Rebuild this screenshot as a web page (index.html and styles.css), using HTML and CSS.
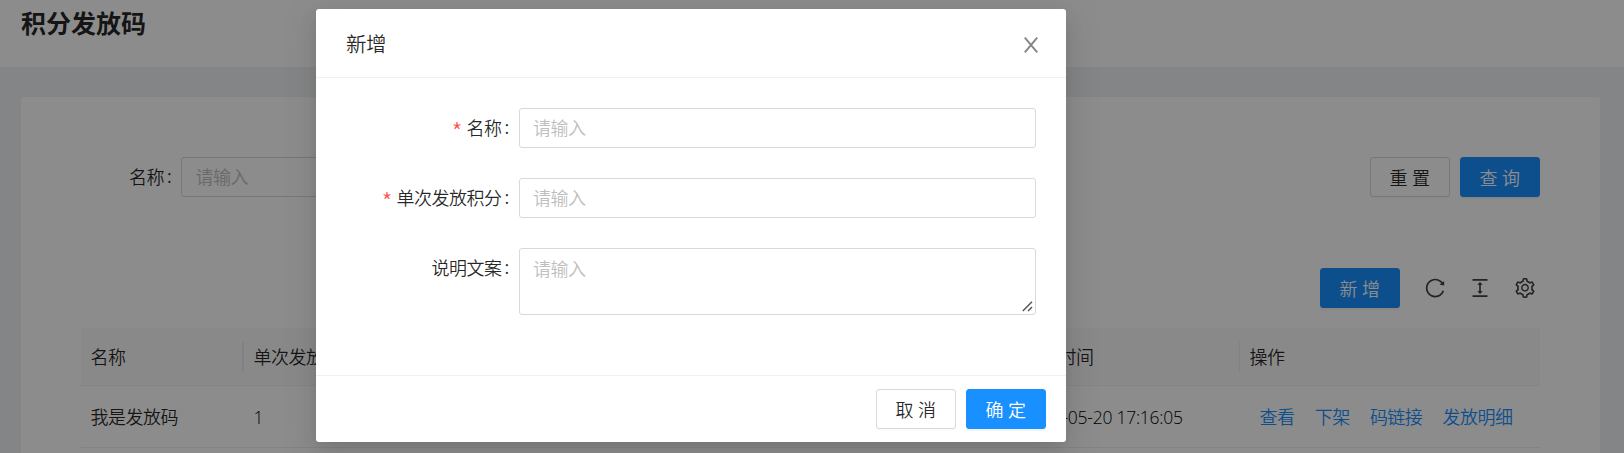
FILE: index.html
```html
<!DOCTYPE html>
<html lang="zh-CN">
<head>
<meta charset="utf-8">
<title>积分发放码</title>
<link rel="stylesheet" href="styles.css">
</head>
<body>
<div class="page">
  <header class="page-header"><h1 class="page-title">积分发放码</h1></header>
  <main class="card">
    <form class="search">
      <label class="label">名称<span class="colon">:</span></label>
      <input class="input search-input" placeholder="请输入">
      <div class="search-actions">
        <button type="button" class="btn">重置</button>
        <button type="button" class="btn primary">查询</button>
      </div>
    </form>
    <div class="toolbar">
      <button type="button" class="btn primary">新增</button>
      <div class="tools">
        <svg class="icon" viewBox="64 64 896 896"><path d="M909.1 209.3l-56.4 44.1C775.8 155.1 656.2 92 521.9 92 290 92 102.3 279.5 102 511.5 101.7 743.7 289.8 932 521.9 932c181.3 0 335.8-115 394.6-276.1 1.5-4.2-.7-8.9-4.9-10.3l-56.7-19.5a8 8 0 0 0-10.1 4.8c-1.8 5-3.8 10-5.9 14.9-17.3 41-42.1 77.8-73.7 109.4A344.77 344.77 0 0 1 655.9 829c-42.3 17.9-87.4 27-133.8 27-46.5 0-91.5-9.1-133.8-27A341.5 341.5 0 0 1 279 755.2a342.16 342.16 0 0 1-73.7-109.4c-17.9-42.4-27-87.4-27-133.9s9.1-91.5 27-133.9c17.3-41 42.1-77.8 73.7-109.4 31.6-31.6 68.4-56.4 109.3-73.8 42.3-17.9 87.4-27 133.8-27 46.5 0 91.5 9.1 133.8 27a341.5 341.5 0 0 1 109.3 73.8c9.9 9.9 19.2 20.4 27.8 31.4l-60.2 47a8 8 0 0 0 3 14.1l175.6 43c5 1.2 9.9-2.6 9.9-7.7l.8-180.9c-.1-6.6-7.8-10.3-13-6.2z"/></svg>
        <svg class="icon" viewBox="64 64 896 896"><path d="M840 836H184c-4.4 0-8 3.600-8 8v60c0 4.400 3.600 8 8 8h656c4.400 0 8-3.600 8-8v-60c0-4.400-3.600-8-8-8zm0-724H184c-4.400 0-8 3.600-8 8v60c0 4.400 3.600 8 8 8h656c4.400 0 8-3.600 8-8v-60c0-4.400-3.600-8-8-8zM610.800 378c6 0 9.400-7 5.700-11.700L515.700 238.700a7.140 7.140 0 0 0-11.300 0L403.600 366.300a7.230 7.230 0 0 0 5.700 11.700H476v268h-62.800c-6 0-9.400 7-5.700 11.700l100.800 127.500c2.900 3.700 8.500 3.700 11.300 0l100.800-127.500c3.700-4.700.4-11.700-5.700-11.700H548V378h62.800z"/></svg>
        <svg class="icon" viewBox="64 64 896 896"><path d="M924.8 625.7l-65.500-56c3.100-19 4.700-38.400 4.700-57.800s-1.600-38.800-4.700-57.800l65.500-56a32.030 32.030 0 0 0 9.300-35.200l-.9-2.600a443.740 443.740 0 0 0-79.700-137.900l-1.800-2.100a32.120 32.120 0 0 0-35.100-9.500l-81.300 28.900c-30-24.600-63.500-44-99.700-57.600l-15.700-85a32.050 32.050 0 0 0-25.800-25.700l-2.700-.5c-52.100-9.400-106.900-9.400-159 0l-2.700.5a32.050 32.050 0 0 0-25.800 25.700l-15.800 85.400a351.860 351.860 0 0 0-99 57.400l-81.900-29.100a32 32 0 0 0-35.100 9.500l-1.800 2.100a446.020 446.020 0 0 0-79.700 137.900l-.9 2.600c-4.500 12.500-.8 26.500 9.300 35.200l66.300 56.600c-3.100 18.800-4.600 38-4.600 57.100 0 19.200 1.500 38.400 4.600 57.100L99 625.500a32.030 32.030 0 0 0-9.300 35.200l.9 2.600c18.100 50.400 44.900 96.900 79.700 137.900l1.800 2.100a32.120 32.120 0 0 0 35.100 9.500l81.900-29.100c29.800 24.500 63.100 43.900 99 57.400l15.800 85.400a32.050 32.050 0 0 0 25.800 25.700l2.700.5a449.400 449.400 0 0 0 159 0l2.700-.5a32.050 32.050 0 0 0 25.800-25.700l15.700-85a350 350 0 0 0 99.700-57.600l81.300 28.900a32 32 0 0 0 35.100-9.500l1.800-2.100c34.800-41.100 61.600-87.500 79.700-137.900l.9-2.600c4.500-12.300.8-26.300-9.300-35zM788.300 465.900c2.500 15.100 3.800 30.600 3.800 46.100s-1.300 31-3.800 46.100l-6.600 40.100 74.700 63.900a370.030 370.030 0 0 1-42.600 73.600L721 702.800l-31.400 25.800c-23.900 19.600-50.500 35-79.300 45.800l-38.100 14.300-17.900 97a377.500 377.500 0 0 1-85 0l-17.900-97.200-37.800-14.500c-28.500-10.800-55-26.200-78.700-45.700l-31.400-25.900-93.400 33.200c-17-22.900-31.200-47.600-42.600-73.600l75.500-64.500-6.500-40c-2.400-14.900-3.700-30.300-3.700-45.500 0-15.300 1.200-30.600 3.700-45.500l6.500-40-75.500-64.500c11.300-26.100 25.600-50.700 42.600-73.600l93.400 33.200 31.400-25.900c23.700-19.500 50.200-34.900 78.700-45.700l37.900-14.300 17.900-97.200c28.100-3.200 56.800-3.200 85 0l17.900 97 38.100 14.300c28.700 10.800 55.400 26.200 79.300 45.800l31.400 25.800 92.800-32.900c17 22.900 31.200 47.600 42.600 73.600L781.800 426l6.500 39.900zM512 326c-97.200 0-176 78.800-176 176s78.800 176 176 176 176-78.800 176-176-78.800-176-176-176zm79.200 255.200A111.600 111.600 0 0 1 512 614c-29.900 0-58-11.700-79.200-32.800A111.600 111.600 0 0 1 400 502c0-29.900 11.700-58 32.800-79.200C454 401.600 482.100 390 512 390c29.900 0 58 11.600 79.200 32.800A111.600 111.600 0 0 1 624 502c0 29.900-11.700 58-32.800 79.200z"/></svg>
      </div>
    </div>
    <div class="table">
      <div class="row head">
        <div class="cell split">名称</div>
        <div class="cell">单次发放积分</div>
        <div class="cell split thin">创建时间</div>
        <div class="cell">操作</div>
      </div>
      <div class="row">
        <div class="cell">我是发放码</div>
        <div class="cell latin">1</div>
        <div class="cell latin">2022-05-20 17:16:05</div>
        <div class="cell links"><a>查看</a><a>下架</a><a>码链接</a><a>发放明细</a></div>
      </div>
    </div>
  </main>
</div>
<div class="mask">
  <section class="modal">
    <div class="modal-header">
      <span class="modal-title">新增</span>
      <svg class="close" viewBox="0 0 14 16"><path d="M.8.6 13.200 15.400M13.200.6.800 15.400"/></svg>
    </div>
    <form class="modal-body">
      <div class="field">
        <label class="label"><span class="star">*</span>名称<span class="colon">:</span></label>
        <input class="input" placeholder="请输入">
      </div>
      <div class="field">
        <label class="label"><span class="star">*</span>单次发放积分<span class="colon">:</span></label>
        <input class="input" placeholder="请输入">
      </div>
      <div class="field">
        <label class="label">说明文案<span class="colon">:</span></label>
        <div class="area-wrap">
          <textarea class="input area" placeholder="请输入"></textarea>
          <svg class="grip" viewBox="0 0 11 11"><path d="M.8 10 10 .8M6 10 10 6"/></svg>
        </div>
      </div>
    </form>
    <div class="modal-footer">
      <button type="button" class="btn">取消</button>
      <button type="button" class="btn primary">确定</button>
    </div>
  </section>
</div>
</body>
</html>
```
FILE: styles.css
```css
* { box-sizing: border-box; }
body {
  margin: 0;
  height: 453px;
  overflow: hidden;
  background: #f0f2f5;
  color: rgba(0, 0, 0, .85);
  font: 350 18px/28px "Noto Sans CJK SC", sans-serif;
  letter-spacing: -.5px;
}
.page { height: 453px; overflow: hidden; }
.page-header { height: 67px; padding: 2px 21px 0; background: #fff; }
.page-title { margin: 0; font-size: 25px; line-height: 40px; font-weight: 700; letter-spacing: 0; }
.card {
  height: 400px;
  margin: 30px 24px 0 21px;
  padding: 60px;
  background: #fff;
  border-radius: 3px;
}
.search { display: flex; height: 40px; padding-left: 48px; }
.search-input { width: 330px; }
.search-actions { display: flex; gap: 10px; margin-left: auto; }
.label {
  display: flex;
  justify-content: flex-end;
  height: 40px;
  padding-right: 10px;
  line-height: 39px;
  white-space: nowrap;
}
.search .label { padding-right: 9px; }
.colon { width: 4px; margin-left: 3.5px; font-family: "Open Sans", sans-serif; font-weight: 400; text-indent: -.5px; }
.star { margin-right: 4.5px; color: #ff4d4f; font-size: 25px; font-weight: 300; position: relative; top: 4px; }
.input {
  display: block;
  height: 40px;
  padding: 0 13px 2px;
  border: 1px solid #d9d9d9;
  border-radius: 3px;
  background: #fff;
  font: inherit;
  letter-spacing: inherit;
  outline: 0;
}
.search-input { padding-left: 14px; }
.input::placeholder { color: #bfbfbf; opacity: 1; }
.btn {
  width: 80px;
  height: 40px;
  padding: 0 0 1px 4px;
  border: 1px solid #d9d9d9;
  border-radius: 3px;
  background: #fff;
  color: rgba(0, 0, 0, .85);
  box-shadow: 0 2px 0 rgba(0, 0, 0, .016);
  font: inherit;
  letter-spacing: 4.5px;
}
.primary { border-color: #1890ff; background: #1890ff; color: #fff; box-shadow: 0 2px 0 rgba(0, 0, 0, .045); }
.toolbar { display: flex; justify-content: flex-end; align-items: center; height: 40px; margin-top: 71px; }
.tools { display: flex; gap: 25px; margin: 0 5px 0 25px; }
.icon { width: 20px; height: 20px; fill: rgba(0, 0, 0, .75); }
.table { margin-top: 20px; }
.row {
  display: grid;
  grid-template-columns: 163px 770px 226px 300px;
  height: 62px;
  border-bottom: 1px solid #f0f0f0;
  align-items: center;
}
.head { height: 58px; background: #fafafa; }
.cell { padding: 0 0 2px 9.5px; white-space: nowrap; }
.split { border-right: 2px solid #ebebeb; }
.thin { border-right-width: 1px; }
.latin { padding-bottom: 0; font-family: "Open Sans", sans-serif; font-size: 17.5px; letter-spacing: -.25px; color: #000; }
.links { display: flex; gap: 20.200px; padding-left: 19.5px; color: #1890ff; }
.mask { position: absolute; inset: 0; padding-top: 9px; background: rgba(0, 0, 0, .45); overflow: hidden; }
.modal {
  width: 750px;
  height: 433px;
  margin-left: 316px;
  border-radius: 3px;
  background: #fff;
  box-shadow: 0 4px 15px -8px rgba(0, 0, 0, .12), 0 8px 20px rgba(0, 0, 0, .08), 0 11px 35px 10px rgba(0, 0, 0, .05);
}
.modal-header {
  display: flex;
  justify-content: space-between;
  align-items: center;
  height: 69px;
  padding: 0 28px 0 30px;
  border-bottom: 1px solid #f0f0f0;
}
.modal-title { font-size: 20.500px; }
.close { width: 14px; height: 16px; margin-top: 3px; fill: none; stroke: #858585; stroke-width: 1.9; }
.modal-body { display: grid; gap: 30px; height: 297px; padding: 30px; align-content: start; }
.field { display: grid; grid-template-columns: 173px 517px; }
.area-wrap { position: relative; }
.area { width: 517px; height: 67px; padding: 4.5px 13px; resize: none; }
.grip { position: absolute; right: 3px; bottom: 3px; width: 11px; height: 11px; fill: none; stroke: #555; stroke-width: 1.5; }
.modal-footer {
  display: flex;
  justify-content: flex-end;
  gap: 10px;
  padding: 13px 20px;
  border-top: 1px solid #f0f0f0;
}
```
